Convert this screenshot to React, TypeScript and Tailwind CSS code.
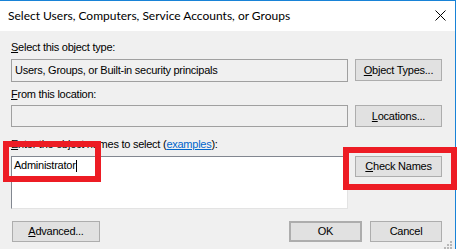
import React from 'react'

const titleFont = { fontFamily: 'Lato, "Liberation Sans", sans-serif' }
const dlgFont = { fontFamily: '"Liberation Sans", Arial, sans-serif' }

function Btn({ children, className = '' }: { children: React.ReactNode; className?: string }) {
  return (
    <div
      className={`flex items-center justify-center bg-[#e1e1e1] border border-[#adadad] text-black ${className}`}
    >
      {children}
    </div>
  )
}

export default function App() {
  return (
    <div className="relative w-[458px] h-[249px] overflow-hidden bg-white">
      <div className="w-[456px] h-[260px] border-t border-r border-[#1883d7] bg-[#f0f0f0] text-black">
        {/* title bar */}
        <div className="h-[30px] bg-white flex items-center justify-between pl-[8px] pr-[9px]" style={titleFont}>
          <span className="text-[12px] leading-[15px] -mt-[1px]">
            Select Users, Computers, Service Accounts, or Groups
          </span>
          <svg width="11" height="11" viewBox="0 0 11 11" className="-mt-[1px]">
            <path d="M0.5 0.5 L10.5 10.5 M10.5 0.5 L0.5 10.5" stroke="#000" strokeWidth="1" />
          </svg>
        </div>

        <div className="pl-[11px] pt-[9px] text-[11px] leading-[15px] tracking-[-0.25px]" style={dlgFont}>
          <div className="h-[15px]">
            <u>S</u>elect this object type:
          </div>
          <div className="mt-[4px] flex items-start gap-[7px]">
            <div className="w-[337px] h-[23px] border border-[#a0a0a0] flex items-center pl-[3px]">
              Users, Groups, or Built-in security principals
            </div>
            <Btn className="w-[87px] h-[22px]">
              <span>
                <u>O</u>bject Types...
              </span>
            </Btn>
          </div>

          <div className="mt-[5px] h-[15px]">
            <u>F</u>rom this location:
          </div>
          <div className="mt-[3px] flex items-start gap-[7px]">
            <div className="w-[337px] h-[22px] border border-[#a0a0a0]" />
            <Btn className="w-[87px] h-[22px]">
              <span>
                <u>L</u>ocations...
              </span>
            </Btn>
          </div>

          <div className="mt-[10px] h-[15px]">
            <u>E</u>nter the object names to select (
            <span className="text-[#0066cc] underline">examples</span>):
          </div>
          <div className="mt-[4px] flex items-start gap-[7px]">
            <div className="w-[337px] h-[53px] bg-white border border-[#828790] border-r-[#e3e3e3] border-b-[#e3e3e3] pl-[2px] pt-[1px]">
              <span className="align-top">Administrator</span>
              <span className="inline-block w-px h-[12px] bg-black align-top mt-[2px]" />
            </div>
            <Btn className="w-[87px] h-[21px]">
              <span>
                <u>C</u>heck Names
              </span>
            </Btn>
          </div>

          <div className="mt-[12px] flex items-start">
            <Btn className="ml-[1px] w-[88px] h-[21px]">
              <span>
                <u>A</u>dvanced...
              </span>
            </Btn>
            <Btn className="ml-auto w-[73px] h-[21px] border-2 border-[#0078d7]">OK</Btn>
            <Btn className="ml-[8px] mr-[13px] w-[72px] h-[21px]">Cancel</Btn>
          </div>
        </div>
      </div>

      {/* resize grip */}
      <svg className="absolute left-[444px] top-[241px]" width="10" height="8" viewBox="0 0 10 8">
        <rect x="6" y="0" width="2" height="2" fill="#b8b8b8" />
        <rect x="3" y="3" width="2" height="2" fill="#b8b8b8" />
        <rect x="6" y="3" width="2" height="2" fill="#b8b8b8" />
        <rect x="0" y="6" width="2" height="2" fill="#b8b8b8" />
        <rect x="3" y="6" width="2" height="2" fill="#b8b8b8" />
        <rect x="6" y="6" width="2" height="2" fill="#b8b8b8" />
      </svg>

      {/* red annotation boxes */}
      <div className="absolute left-[3px] top-[141px] w-[98px] h-[41px] border-[6px] border-[#ed1c24]" />
      <div className="absolute left-[343px] top-[147px] w-[114px] h-[43px] border-[6px] border-[#ed1c24]" />
    </div>
  )
}
